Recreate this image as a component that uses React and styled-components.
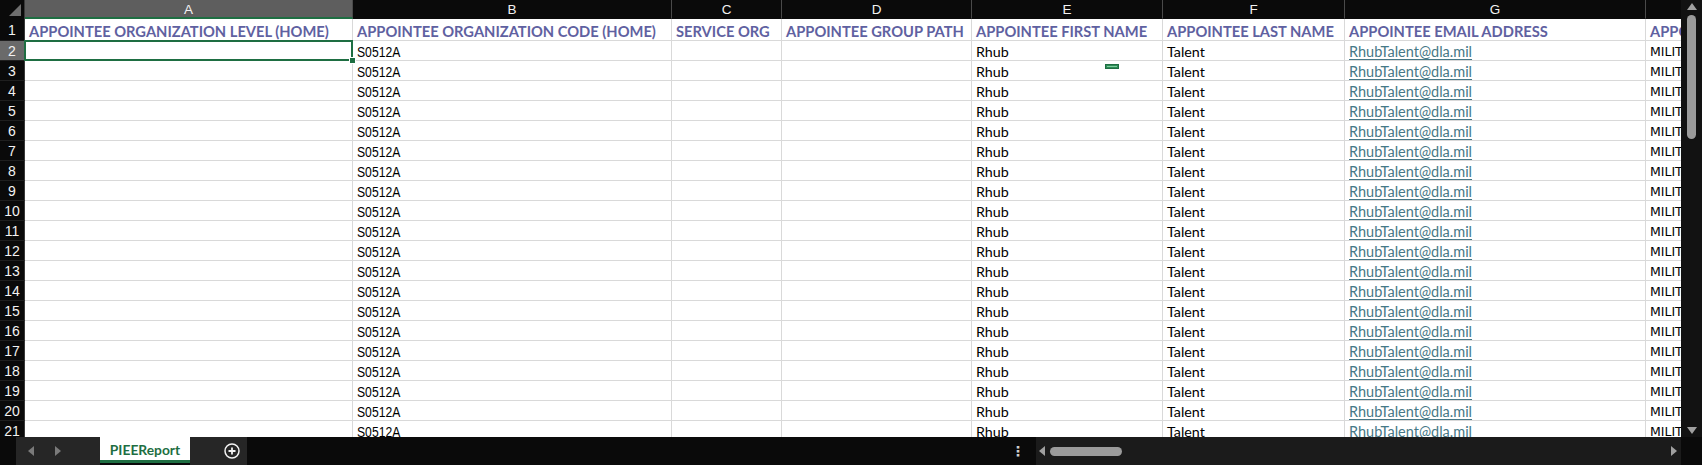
import React from "react";
import styled, { createGlobalStyle, css } from "styled-components";

const GlobalStyle = createGlobalStyle`
  html, body { margin: 0; padding: 0; background: #0a0a0a; }
  * { box-sizing: border-box; }
`;

const GREEN = "#1e6e42";
const GRID = "#d9d9d9";

const columns = [
  { letter: "A", width: 328, title: "APPOINTEE ORGANIZATION LEVEL (HOME)", kind: "narrow", value: "" },
  { letter: "B", width: 319, title: "APPOINTEE ORGANIZATION CODE (HOME)", kind: "narrow", value: "S0512A" },
  { letter: "C", width: 110, title: "SERVICE ORG", kind: "narrow", value: "" },
  { letter: "D", width: 190, title: "APPOINTEE GROUP PATH", kind: "narrow", value: "" },
  { letter: "E", width: 191, title: "APPOINTEE FIRST NAME", kind: "calibri", value: "Rhub" },
  { letter: "F", width: 182, title: "APPOINTEE LAST NAME", kind: "calibri", value: "Talent" },
  { letter: "G", width: 301, title: "APPOINTEE EMAIL ADDRESS", kind: "link", value: "RhubTalent@dla.mil" },
  { letter: "H", width: 220, title: "APPOINTEE TYPE", kind: "tahoma", value: "MILITARY" },
];

const rowNumbers = Array.from({ length: 20 }, (_, i) => i + 2);

const Window = styled.div`
  width: 1702px;
  height: 465px;
  display: flex;
  flex-direction: column;
  background: #0a0a0a;
  overflow: hidden;
`;

const Main = styled.div`
  display: flex;
  height: 437px;
  flex: none;
`;

const Sheet = styled.div`
  width: 1681px;
  height: 437px;
  overflow: hidden;
  display: grid;
  grid-template-columns: 25px ${columns.map((c) => `${c.width}px`).join(" ")};
  grid-template-rows: 19px 22px repeat(20, 20px);
  background: #ffffff;
`;

const Corner = styled.div`
  background: #0a0a0a;
  border-right: 1px solid #3a3a3a;
  display: flex;
  align-items: flex-end;
  justify-content: flex-end;
  padding: 0 3px 3px 0;
`;

const CornerTriangle = styled.div`
  width: 0;
  height: 0;
  border-left: 12px solid transparent;
  border-bottom: 12px solid #6e6e6e;
`;

const ColHeader = styled.div`
  background: ${(p) => (p.$active ? "#5e5e5e" : "#0a0a0a")};
  color: #f2f2f2;
  border-right: 1px solid #4a4a4a;
  border-bottom: ${(p) => (p.$active ? `2px solid ${GREEN}` : "1px solid #0a0a0a")};
  display: flex;
  align-items: center;
  justify-content: center;
  font-family: "Liberation Sans", sans-serif;
  font-size: 13.5px;
  padding-top: 1px;
`;

const RowHeader = styled.div`
  background: ${(p) => (p.$active ? "#6a6a6a" : "#0a0a0a")};
  color: #f2f2f2;
  border-bottom: 1px solid #1f1f1f;
  border-right: 1px solid #3a3a3a;
  display: flex;
  align-items: center;
  justify-content: center;
  font-family: "Liberation Sans", sans-serif;
  font-size: 14px;
  padding-top: 1px;
`;

const kindStyles = {
  title: css`
    font-family: Lato, "Noto Sans", sans-serif;
    font-weight: 700;
    font-size: 14.7px;
    color: #5f61a1;
  `,
  narrow: css`
    font-family: "Liberation Sans", Arial, sans-serif;
    font-size: 14.67px;
    color: #000;
  `,
  calibri: css`
    font-family: Lato, "Noto Sans", sans-serif;
    font-size: 14.3px;
    color: #000;
  `,
  link: css`
    font-family: Lato, "Noto Sans", sans-serif;
    font-size: 14.5px;
    color: #467886;
  `,
  tahoma: css`
    font-family: "DejaVu Sans", Verdana, sans-serif;
    font-size: 12.5px;
    color: #000;
  `,
};

const Cell = styled.div`
  position: relative;
  border-right: 1px solid ${GRID};
  border-bottom: 1px solid ${GRID};
  display: flex;
  align-items: center;
  padding: 2px 3px 0 4px;
  white-space: nowrap;
  overflow: ${(p) => (p.$clip ? "hidden" : "visible")};
  ${(p) => kindStyles[p.$kind]}
`;

const NarrowText = styled.span`
  display: inline-block;
  transform: scaleX(0.83);
  transform-origin: left center;
`;

const Link = styled.span`
  text-decoration: underline;
  text-underline-offset: 2px;
  text-decoration-thickness: 1px;
`;

const Selection = styled.div`
  position: absolute;
  left: -1px;
  top: -1px;
  right: -1px;
  bottom: -1px;
  border: 2px solid ${GREEN};
  pointer-events: none;
  z-index: 2;
`;

const FillHandle = styled.div`
  position: absolute;
  right: -5px;
  bottom: -5px;
  width: 7px;
  height: 7px;
  background: ${GREEN};
  border: 1px solid #ffffff;
`;

const Marker = styled.div`
  position: absolute;
  left: 133px;
  top: 3px;
  width: 14px;
  height: 5px;
  background: #2e8b57;
  border: 1px solid ${GREEN};
  z-index: 2;
  &::after {
    content: "";
    position: absolute;
    left: 1px;
    right: 1px;
    top: 1px;
    height: 1px;
    background: #7fcf9f;
  }
`;

const VScroll = styled.div`
  width: 21px;
  height: 437px;
  background: #121212;
  display: flex;
  flex-direction: column;
  align-items: center;
  padding: 3px 0 3px;
`;

const VThumb = styled.div`
  width: 9px;
  height: 124px;
  margin-top: 5px;
  border-radius: 5px;
  background: #9b9b9b;
`;

const Grow = styled.div`
  flex: 1;
`;

const Arrow = styled.div`
  width: 0;
  height: 0;
  ${(p) =>
    p.$dir === "up" &&
    css`
      border-left: 5px solid transparent;
      border-right: 5px solid transparent;
      border-bottom: 7px solid #a0a0a0;
    `}
  ${(p) =>
    p.$dir === "down" &&
    css`
      border-left: 5px solid transparent;
      border-right: 5px solid transparent;
      border-top: 7px solid #a0a0a0;
    `}
  ${(p) =>
    p.$dir === "left" &&
    css`
      border-top: 5px solid transparent;
      border-bottom: 5px solid transparent;
      border-right: 6px solid ${p.$color || "#a0a0a0"};
    `}
  ${(p) =>
    p.$dir === "right" &&
    css`
      border-top: 5px solid transparent;
      border-bottom: 5px solid transparent;
      border-left: 6px solid ${p.$color || "#a0a0a0"};
    `}
`;

const BottomBar = styled.div`
  height: 28px;
  display: flex;
  align-items: stretch;
  background: #0a0a0a;
  padding-left: 16px;
`;

const NavGroup = styled.div`
  width: 84px;
  background: #262626;
  display: flex;
  align-items: center;
  gap: 21px;
  padding-left: 12px;
`;

const SheetTab = styled.div`
  width: 90px;
  height: 26px;
  background: #ffffff;
  border-bottom: 3px solid ${GREEN};
  display: flex;
  align-items: center;
  justify-content: center;
  font-family: Lato, "Noto Sans", sans-serif;
  font-weight: 700;
  font-size: 13.8px;
  color: #1e6e42;
  padding-top: 1px;
`;

const AddGroup = styled.div`
  width: 57px;
  background: #262626;
  display: flex;
  align-items: center;
  padding-left: 34px;
`;

const Kebab = styled.div`
  width: 36px;
  margin-left: auto;
  display: flex;
  align-items: center;
  justify-content: center;
  color: #cfcfcf;
  font-family: "DejaVu Sans", sans-serif;
  font-size: 14px;
  font-weight: 700;
`;

const HTrack = styled.div`
  width: 645px;
  background: #1b1b1b;
  display: flex;
  align-items: center;
  padding: 0 4px 0 3px;
`;

const HThumb = styled.div`
  width: 72px;
  height: 9px;
  border-radius: 5px;
  background: #9b9b9b;
  margin-left: 5px;
`;

const RightPad = styled.div`
  width: 21px;
`;

const PlusIcon = () => (
  <svg width="16" height="16" viewBox="0 0 16 16">
    <circle cx="8" cy="8" r="7" fill="none" stroke="#f2f2f2" strokeWidth="1.5" />
    <path d="M8 4.5v7M4.5 8h7" stroke="#f2f2f2" strokeWidth="1.8" />
  </svg>
);

function CellContent({ column }) {
  if (!column.value) return null;
  if (column.kind === "link") return <Link>{column.value}</Link>;
  if (column.kind === "narrow") return <NarrowText>{column.value}</NarrowText>;
  return column.value;
}

export default function App() {
  return (
    <>
      <GlobalStyle />
      <Window>
        <Main>
          <Sheet>
            <Corner>
              <CornerTriangle />
            </Corner>
            {columns.map((c) => (
              <ColHeader key={c.letter} $active={c.letter === "A"}>
                {c.letter}
              </ColHeader>
            ))}

            <RowHeader>1</RowHeader>
            {columns.map((c) => (
              <Cell key={`t-${c.letter}`} $kind="title" $clip={c.letter === "H"}>
                {c.title}
              </Cell>
            ))}

            {rowNumbers.map((r) => (
              <React.Fragment key={r}>
                <RowHeader $active={r === 2}>{r}</RowHeader>
                {columns.map((c) => (
                  <Cell key={c.letter} $kind={c.kind} $clip={c.letter === "H"}>
                    <CellContent column={c} />
                    {r === 2 && c.letter === "A" && (
                      <Selection>
                        <FillHandle />
                      </Selection>
                    )}
                    {r === 3 && c.letter === "E" && <Marker />}
                  </Cell>
                ))}
              </React.Fragment>
            ))}
          </Sheet>
          <VScroll>
            <Arrow $dir="up" />
            <VThumb />
            <Grow />
            <Arrow $dir="down" />
          </VScroll>
        </Main>
        <BottomBar>
          <NavGroup>
            <Arrow $dir="left" $color="#7a7a7a" />
            <Arrow $dir="right" $color="#7a7a7a" />
          </NavGroup>
          <SheetTab>PIEEReport</SheetTab>
          <AddGroup>
            <PlusIcon />
          </AddGroup>
          <Kebab>⋮</Kebab>
          <HTrack>
            <Arrow $dir="left" />
            <HThumb />
            <Grow />
            <Arrow $dir="right" />
          </HTrack>
          <RightPad />
        </BottomBar>
      </Window>
    </>
  );
}
